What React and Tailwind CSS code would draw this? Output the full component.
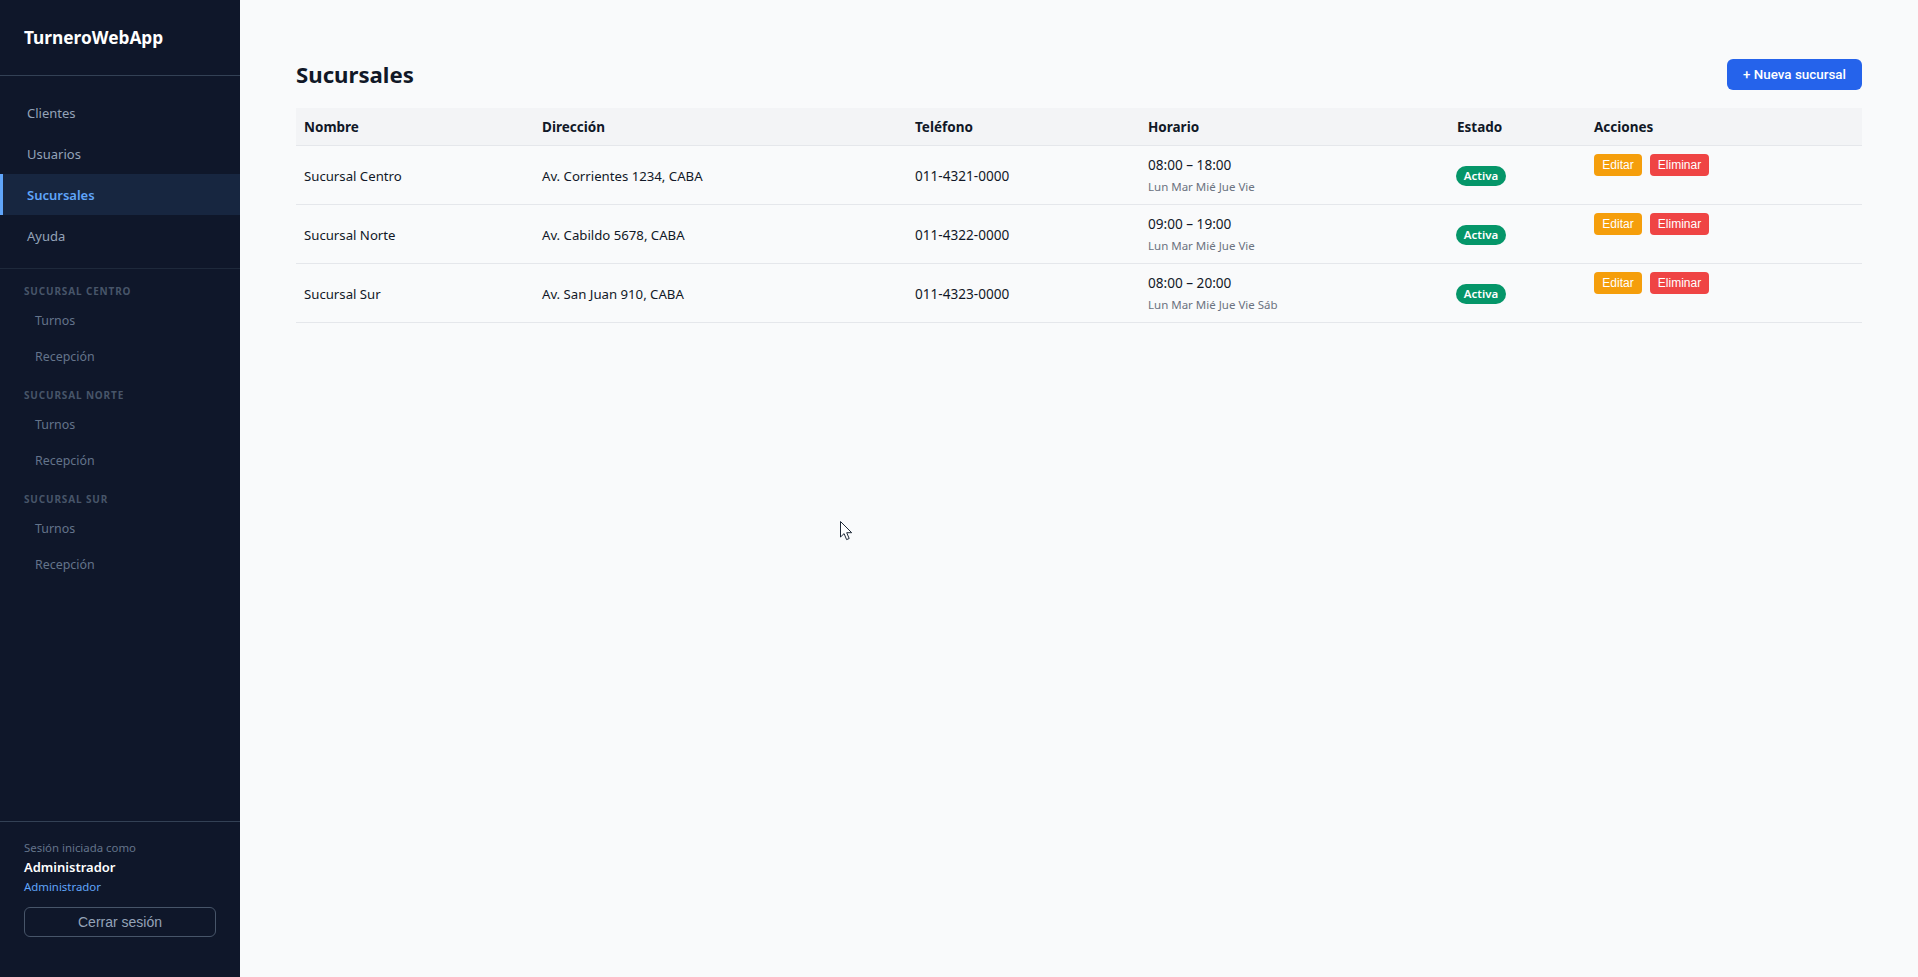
const font = "font-['Noto_Sans','Open_Sans',sans-serif]";

const navItems = [
  { label: "Clientes" },
  { label: "Usuarios" },
  { label: "Sucursales", active: true },
  { label: "Ayuda" },
];

const branchGroups = ["Sucursal Centro", "Sucursal Norte", "Sucursal Sur"];

const branches = [
  { name: "Sucursal Centro", address: "Av. Corrientes 1234, CABA", phone: "011-4321-0000", hours: "08:00 – 18:00", days: "Lun Mar Mié Jue Vie" },
  { name: "Sucursal Norte", address: "Av. Cabildo 5678, CABA", phone: "011-4322-0000", hours: "09:00 – 19:00", days: "Lun Mar Mié Jue Vie" },
  { name: "Sucursal Sur", address: "Av. San Juan 910, CABA", phone: "011-4323-0000", hours: "08:00 – 20:00", days: "Lun Mar Mié Jue Vie Sáb" },
];

function Sidebar() {
  return (
    <aside className="flex h-screen w-[240px] shrink-0 flex-col bg-[#0f172a]">
      <div className="flex h-[76px] items-center border-b border-[#334155] pl-6">
        <span className="text-[17.3px] font-bold text-white">TurneroWebApp</span>
      </div>

      <nav className="border-b border-[#1e293b] pt-4 pb-3">
        {navItems.map((item) => (
          <a
            key={item.label}
            className={`flex h-[41px] items-center border-l-[3px] pt-[2px] pl-6 text-[13px] ${
              item.active
                ? "border-[#60a5fa] bg-[#172640] font-semibold text-[#60a5fa]"
                : "border-transparent text-[#94a3b8]"
            }`}
          >
            {item.label}
          </a>
        ))}
      </nav>

      <div className="pt-[10px]">
        {branchGroups.map((group) => (
          <div key={group} className="h-[104px]">
            <p className="flex h-[24px] items-center pl-6 text-[10px] font-bold tracking-[0.85px] text-[#475569] uppercase">
              {group}
            </p>
            <a className="flex h-[36px] items-center pl-[35px] text-[12.4px] text-[#64748b]">Turnos</a>
            <a className="flex h-[36px] items-center pl-[35px] text-[12.4px] text-[#64748b]">Recepción</a>
          </div>
        ))}
      </div>

      <div className="mt-auto h-[156px] border-t border-[#334155] px-6 pt-[17px]">
        <p className="text-[11.4px] leading-[18px] text-[#64748b]">Sesión iniciada como</p>
        <p className="mt-[1px] text-[13px] leading-[18px] font-semibold text-white">Administrador</p>
        <p className="mt-[2px] text-[11.4px] leading-[18px] text-[#60a5fa]">Administrador</p>
        <button className="mt-[11px] flex h-[30px] w-full items-center justify-center rounded-[6px] border border-[#475569] font-['Liberation_Sans',sans-serif] text-[14px] text-[#94a3b8]">
          Cerrar sesión
        </button>
      </div>
    </aside>
  );
}

function BranchRow({ branch }) {
  return (
    <tr className="h-[59px] border-b border-[#e5e7eb] text-[13.2px] text-[#111827]">
      <td className="px-2 pt-[5px] align-middle">{branch.name}</td>
      <td className="px-2 pt-[5px] align-middle">{branch.address}</td>
      <td className="px-2 pt-[3px] align-middle text-[13.6px]">{branch.phone}</td>
      <td className="px-2 pt-[1px] align-middle">
        <div className="text-[13.6px] leading-[20px]">{branch.hours}</div>
        <div className="mt-[4px] text-[11.5px] leading-[16px] text-[#6b7280]">{branch.days}</div>
      </td>
      <td className="pt-[3px] pr-2 pl-[7px] align-middle">
        <span className="inline-flex h-[20px] w-[50px] items-center justify-center rounded-full bg-[#059669] text-[11.5px] font-semibold text-white">
          Activa
        </span>
      </td>
      <td className="px-2 pt-2 align-top">
        <div className="flex gap-2 font-['Liberation_Sans',sans-serif] text-[12px] text-white">
          <button className="flex h-[22px] w-[48px] items-center justify-center rounded-[4px] bg-[#f59e0b]">Editar</button>
          <button className="flex h-[22px] w-[59px] items-center justify-center rounded-[4px] bg-[#ef4444]">Eliminar</button>
        </div>
      </td>
    </tr>
  );
}

export default function App() {
  return (
    <div className={`relative flex h-screen overflow-hidden bg-[#f9fafb] ${font}`}>
      <Sidebar />

      <main className="flex-1 px-14 pt-[59px]">
        <div className="mb-[18px] flex h-[31px] items-center justify-between">
          <h1 className="text-[22.2px] font-bold text-[#111827]">Sucursales</h1>
          <button className="flex h-[31px] w-[135px] items-center justify-center rounded-[6px] bg-[#2563eb] pt-[1px] font-['Roboto',sans-serif] text-[13.4px] font-medium text-white">
            + Nueva sucursal
          </button>
        </div>

        <table className="w-full table-fixed border-collapse">
          <thead>
            <tr className="h-[37px] border-b border-[#e5e7eb] bg-[#f3f4f6] text-left text-[13.5px] font-bold text-[#111827]">
              <th className="w-[238px] px-2 pt-[2px]">Nombre</th>
              <th className="w-[373px] px-2 pt-[2px]">Dirección</th>
              <th className="w-[233px] px-2 pt-[2px]">Teléfono</th>
              <th className="w-[309px] px-2 pt-[2px]">Horario</th>
              <th className="w-[137px] px-2 pt-[2px]">Estado</th>
              <th className="px-2 pt-[2px]">Acciones</th>
            </tr>
          </thead>
          <tbody>
            {branches.map((branch) => (
              <BranchRow key={branch.name} branch={branch} />
            ))}
          </tbody>
        </table>
      </main>

      {/* mouse pointer caught in the screenshot */}
      <svg className="absolute top-[521px] left-[840px]" width="13" height="20" viewBox="0 0 13 20">
        <path d="M.5.5v15.5l3.6-3.4 2.5 6 2.6-1.1-2.5-5.8h5z" fill="#fff" stroke="#1f2937" strokeWidth="1" />
      </svg>
    </div>
  );
}
